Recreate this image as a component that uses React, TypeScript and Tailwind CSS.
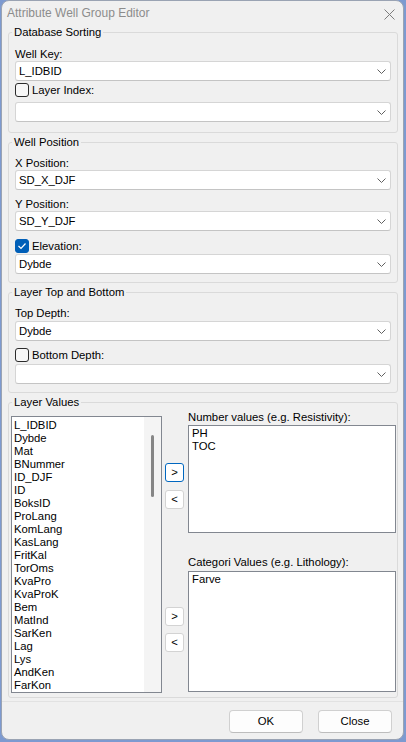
import React from 'react';

const Chevron = () => (
  <svg width="9" height="5" viewBox="0 0 9 5" className="shrink-0">
    <path d="M0.5 0.5 L4.5 4.5 L8.5 0.5" fill="none" stroke="#606060" strokeWidth="1" />
  </svg>
);

const Combo = ({ value, className = '' }: { value?: string; className?: string }) => (
  <div
    className={`flex h-[20px] items-center justify-between rounded-[3px] border border-[#d5d5d5] border-b-[#c4c4c4] bg-white pl-[3px] pr-[4px] ${className}`}
  >
    <span className="leading-[14px]">{value}</span>
    <Chevron />
  </div>
);

const CheckBox = ({ label, checked, className = '' }: { label: string; checked?: boolean; className?: string }) => (
  <div className={`flex h-[14px] items-center gap-[3px] ${className}`}>
    <span
      className={`flex h-[14px] w-[14px] items-center justify-center rounded-[3px] border ${
        checked ? 'border-[#005fb8] bg-[#005fb8]' : 'border-[#2b2b2b] bg-[#f7f7f7]'
      }`}
    >
      {checked && (
        <svg width="10" height="8" viewBox="0 0 10 8">
          <path d="M1.5 4 L4 6.5 L8.5 1.5" fill="none" stroke="white" strokeWidth="1.2" />
        </svg>
      )}
    </span>
    <span className="leading-[14px]">{label}</span>
  </div>
);

const Label = ({ text, className = '' }: { text: string; className?: string }) => (
  <div className={`h-[14px] leading-[14px] ${className}`}>{text}</div>
);

const Group = ({
  title,
  className = '',
  legendClass = '-ml-[3px]',
  children,
}: {
  title: string;
  className?: string;
  legendClass?: string;
  children: React.ReactNode;
}) => (
  <fieldset className={`ml-[6px] w-[390px] rounded-[3px] border border-[#dadada] ${className}`}>
    <legend className={`px-[2px] leading-[14px] ${legendClass}`}>{title}</legend>
    {children}
  </fieldset>
);

const SmallButton = ({ text, focused, className = '' }: { text: string; focused?: boolean; className?: string }) => (
  <button
    className={`flex h-[19px] w-[19px] items-center justify-center rounded-[3px] border bg-white leading-none ${
      focused ? 'border-[#0067c0]' : 'border-[#d3d3d3]'
    } ${className}`}
  >
    {text}
  </button>
);

const layerItems = [
  'L_IDBID', 'Dybde', 'Mat', 'BNummer', 'ID_DJF', 'ID', 'BoksID', 'ProLang', 'KomLang', 'KasLang',
  'FritKal', 'TorOms', 'KvaPro', 'KvaProK', 'Bem', 'MatInd', 'SarKen', 'Lag', 'Lys', 'AndKen', 'FarKon',
];

export default function App() {
  return (
    <div className="h-[742px] w-[406px] overflow-hidden bg-[#7d9ad0] font-['Liberation_Sans',Arial,sans-serif] text-[11.3px] text-black">
      <div className="ml-[1px] flex h-[740px] w-[403px] flex-col rounded-[8px] border border-[#9aa3b3] bg-[#f0f0f0]">
        {/* title bar */}
        <div className="flex h-[24px] items-start justify-between pl-[5px] pr-[8px] pt-[5px]">
          <span className="text-[12px] leading-[15px] text-[#8c8c8c]">Attribute Well Group Editor</span>
          <svg width="11" height="11" viewBox="0 0 11 11" className="mt-[3px]">
            <path d="M0.5 0.5 L10.5 10.5 M10.5 0.5 L0.5 10.5" stroke="#7c7c7c" strokeWidth="1" />
          </svg>
        </div>

        <Group title="Database Sorting" className="px-[6px] pb-[10px]">
          <Label text="Well Key:" className="mt-[8px]" />
          <Combo value="L_IDBID" />
          <CheckBox label="Layer Index:" className="mt-[2px]" />
          <Combo className="mt-[5px]" />
        </Group>

        <Group title="Well Position" className="mt-[2px] px-[6px] pb-[8px]">
          <Label text="X Position:" className="mt-[7px]" />
          <Combo value="SD_X_DJF" />
          <Label text="Y Position:" className="mt-[7px]" />
          <Combo value="SD_Y_DJF" />
          <CheckBox label="Elevation:" checked className="mt-[8px]" />
          <Combo value="Dybde" className="mt-[1px]" />
        </Group>

        <Group title="Layer Top and Bottom" className="mt-[2px] px-[6px] pb-[8px]">
          <Label text="Top Depth:" className="mt-[7px]" />
          <Combo value="Dybde" className="mt-[1px]" />
          <CheckBox label="Bottom Depth:" className="mt-[7px]" />
          <Combo className="mt-[2px]" />
        </Group>

        <Group title="Layer Values" legendClass="ml-[1px]" className="mt-[2px] pl-[2px] pr-[1px] pb-[4px]">
          <div className="flex">
            {/* source list */}
            <div className="mt-[7px] flex h-[277px] w-[151px] border border-[#828790] bg-white">
              <div className="flex-1 pl-[2px] pt-[2px]">
                {layerItems.map((item) => (
                  <div key={item} className="h-[13px] leading-[13px]">
                    {item}
                  </div>
                ))}
              </div>
              <div className="flex w-[17px] flex-col items-center bg-[#f4f4f4] pt-[18px]">
                <div className="h-[62px] w-[3px] rounded-full bg-[#868686]" />
              </div>
            </div>

            {/* move buttons */}
            <div className="ml-[3px] flex flex-col">
              <SmallButton text=">" focused className="mt-[54px]" />
              <SmallButton text="<" className="mt-[8px]" />
              <SmallButton text=">" className="mt-[98px]" />
              <SmallButton text="<" className="mt-[7px]" />
            </div>

            {/* target lists */}
            <div className="ml-[4px] flex flex-1 flex-col">
              <Label text="Number values (e.g. Resistivity):" className="mt-[1px]" />
              <div className="mt-[1px] h-[108px] border border-[#828790] bg-white pl-[3px] pt-[1px]">
                <div className="h-[13px] leading-[13px]">PH</div>
                <div className="h-[13px] leading-[13px]">TOC</div>
              </div>
              <Label text="Categori Values (e.g. Lithology):" className="mt-[22px]" />
              <div className="mt-[2px] h-[121px] border border-[#828790] bg-white pl-[3px] pt-[1px]">
                <div className="h-[13px] leading-[13px]">Farve</div>
              </div>
            </div>
          </div>
        </Group>

        {/* footer */}
        <div className="mt-[3px] flex flex-1 justify-end gap-[15px] rounded-b-[8px] border-t border-[#e2e2e2] pr-[11px] pt-[8px]">
          <button className="h-[23px] w-[74px] rounded-[4px] border border-[#d0d0d0] border-b-[#bdbdbd] bg-[#fdfdfd] text-[11.3px]">
            OK
          </button>
          <button className="h-[23px] w-[74px] rounded-[4px] border border-[#d0d0d0] border-b-[#bdbdbd] bg-[#fdfdfd] text-[11.3px]">
            Close
          </button>
        </div>
      </div>
    </div>
  );
}
